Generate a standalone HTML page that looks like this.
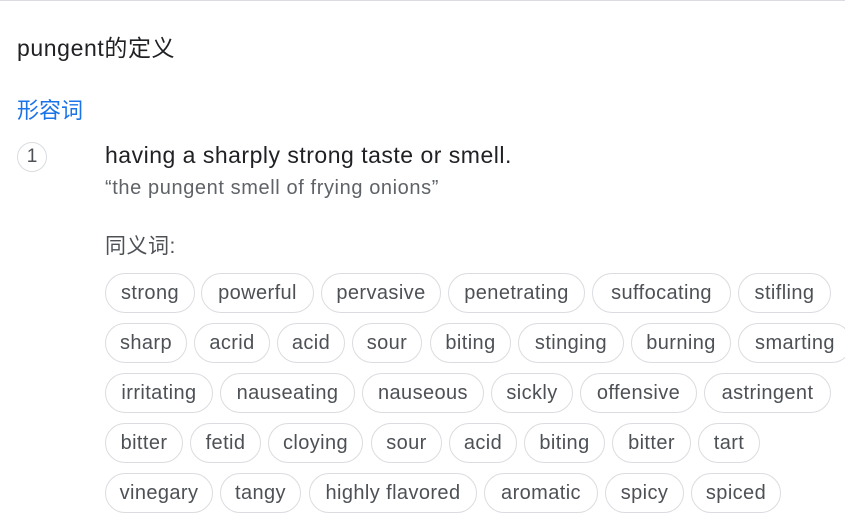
<!DOCTYPE html>
<html><head><meta charset="utf-8"><style>
body{margin:0;width:845px;height:507px;overflow:hidden;background:#fff;font-family:"Liberation Sans","Noto Sans CJK SC",sans-serif;position:relative}
.t{position:absolute;white-space:nowrap}
.c{position:absolute;height:38px;border:1px solid #dadce0;border-radius:20px;box-sizing:content-box;color:#4d5156;font-size:20px;letter-spacing:0.4px;line-height:38px;text-align:center;white-space:nowrap}
</style></head><body>
<div style="position:absolute;left:0;top:0;width:845px;height:1px;background:#dadce0"></div>
<div class="t" style="left:17px;top:29px;font-size:23px;letter-spacing:0.6px;color:#202124">pungent的定义</div>
<div class="t" style="left:17px;top:93px;font-size:22px;color:#1a73e8">形容词</div>
<div style="position:absolute;left:17px;top:142px;width:28px;height:28px;border:1px solid #dadce0;border-radius:50%;text-align:center;line-height:28px;font-size:19px;color:#4d5156">1</div>
<div class="t" style="left:105px;top:142px;font-size:23px;letter-spacing:0.5px;color:#202124">having a sharply strong taste or smell.</div>
<div class="t" style="left:105px;top:177px;font-size:20px;letter-spacing:0.6px;color:#5f6368">“the pungent smell of frying onions”</div>
<div class="t" style="left:105px;top:230px;font-size:21px;letter-spacing:0.5px;color:#4d5156">同义词:</div>
<div id="chips"></div>
<script>
var rows=[[273,[["strong",105,195],["powerful",201,314],["pervasive",321,441],["penetrating",448,585],["suffocating",592,731],["stifling",738,831]]],
[323,[["sharp",105,187],["acrid",194,270],["acid",277,345],["sour",352,422],["biting",430,511],["stinging",518,624],["burning",631,731],["smarting",738,852]]],
[373,[["irritating",105,213],["nauseating",220,355],["nauseous",362,484],["sickly",491,573],["offensive",580,697],["astringent",704,831]]],
[423,[["bitter",105,183],["fetid",190,261],["cloying",268,363],["sour",371,442],["acid",449,517],["biting",524,605],["bitter",612,691],["tart",698,760]]],
[473,[["vinegary",105,213],["tangy",220,301],["highly flavored",309,477],["aromatic",484,598],["spicy",605,684],["spiced",691,781]]]];
var h="";rows.forEach(function(r){r[1].forEach(function(c){h+='<div class="c" style="top:'+r[0]+'px;left:'+c[1]+'px;width:'+(c[2]-c[1]-2)+'px">'+c[0]+'</div>';});});
document.getElementById("chips").innerHTML=h;
</script>
</body></html>
